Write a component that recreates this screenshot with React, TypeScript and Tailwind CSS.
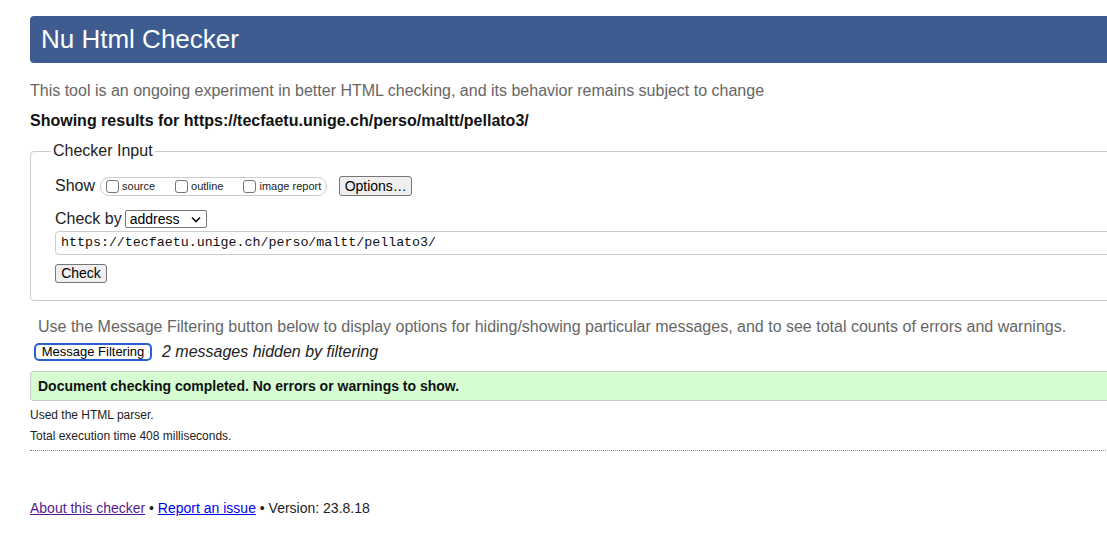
import React from "react";

const sans = "font-['Liberation_Sans',Arial,sans-serif]";

function Box({ label }: { label: string }) {
  return (
    <span className="flex items-center gap-[3px]">
      <span className="inline-block h-[13px] w-[13px] rounded-[3px] border border-[#767676] bg-white" />
      <span className="text-[11px] leading-[13px] text-[#222]">{label}</span>
    </span>
  );
}

export default function App() {
  return (
    <div className={`${sans} h-[541px] w-full overflow-hidden bg-white text-[#222]`}>
      <div className="ml-[30px] w-[1100px]">
        {/* title bar */}
        <div className="mt-[16px] h-[47px] rounded-l-[4px] bg-[#3e5c8f] pl-[11px] text-[26px] leading-[47px] text-white">
          Nu Html Checker
        </div>

        <p className="mt-[18px] text-[16px] leading-[20px] text-[#666]">
          This tool is an ongoing experiment in better HTML checking, and its behavior remains subject to change
        </p>
        <p className="mt-[10px] text-[16px] font-bold leading-[20px] text-[#111]">
          Showing results for https://tecfaetu.unige.ch/perso/maltt/pellato3/
        </p>

        {/* checker input */}
        <fieldset className="mt-[11px] rounded-[4px] border border-[#ccc] pb-[15px] pl-[24px] pt-[16px]">
          <legend className="-ml-[4px] px-[2px] text-[16px] leading-[18px] text-[#222]">Checker Input</legend>

          <div className="flex items-center">
            <span className="text-[16px] leading-[18px]">Show</span>
            <div className="ml-[5px] flex h-[19px] items-center gap-[20px] rounded-[9px] border border-[#ccc] px-[5px]">
              <Box label="source" />
              <Box label="outline" />
              <Box label="image report" />
            </div>
            <button className="ml-[12px] h-[20px] w-[73px] rounded-[3px] border border-[#767676] bg-[#efefef] text-[14px] leading-[18px] text-black">
              Options…
            </button>
          </div>

          <div className="mt-[14px] flex items-center">
            <span className="text-[16px] leading-[18px]">Check by</span>
            <span className="ml-[3px] flex h-[18px] w-[82px] items-center justify-between rounded-[2px] border border-[#767676] bg-white pl-[4px] pr-[5px] text-[14px] leading-[16px] text-black">
              address
              <svg width="10" height="7" viewBox="0 0 10 7" fill="none">
                <path d="M1 1.5 5 5.5 9 1.5" stroke="#111" strokeWidth="1.6" />
              </svg>
            </span>
          </div>

          <div className="mt-[3px] flex h-[24px] items-center rounded-[4px] border border-[#ccc] pl-[5px] font-['Liberation_Mono',monospace] text-[13.3px] text-[#111]">
            https://tecfaetu.unige.ch/perso/maltt/pellato3/
          </div>

          <button className="mt-[9px] h-[19px] w-[52px] rounded-[3px] border border-[#767676] bg-[#efefef] text-[14px] leading-[17px] text-black">
            Check
          </button>
        </fieldset>

        <p className="ml-[8px] mt-[16px] text-[16px] leading-[20px] text-[#666]">
          Use the Message Filtering button below to display options for hiding/showing particular messages, and to see total counts of errors and warnings.
        </p>

        <div className="mt-[5px] flex items-center">
          <button className="ml-[4px] h-[18px] w-[118px] rounded-[5px] border-2 border-[#2b5fd0] bg-white text-[13px] leading-[14px] text-black">
            Message Filtering
          </button>
          <span className="ml-[10px] text-[16px] italic leading-[20px] text-[#222]">2 messages hidden by filtering</span>
        </div>

        <div className="mt-[9px] flex h-[30px] items-center rounded-l-[3px] border border-[#ccc] bg-[#d5fdd1] pl-[7px] text-[14px] font-bold text-[#111]">
          Document checking completed. No errors or warnings to show.
        </div>

        <p className="mt-[7px] text-[12px] leading-[14px] text-[#222]">Used the HTML parser.</p>
        <p className="mt-[7px] text-[12px] leading-[14px] text-[#222]">Total execution time 408 milliseconds.</p>

        <div className="mt-[7px] border-b border-dotted border-[#888]" />

        <p className="mt-[49px] text-[14px] leading-[16px] text-[#222]">
          <a href="#" className="text-[#551a8b] underline">About this checker</a>
          {" • "}
          <a href="#" className="text-[#0000ee] underline">Report an issue</a>
          {" • Version: 23.8.18"}
        </p>
      </div>
    </div>
  );
}
